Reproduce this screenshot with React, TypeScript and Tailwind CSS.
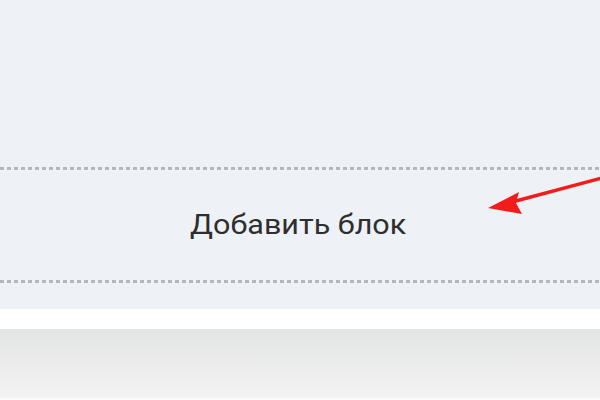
export default function App() {
  return (
    <div className="relative h-[400px] w-[600px] overflow-hidden bg-white font-['Roboto','Liberation_Sans',sans-serif]">
      <section className="flex h-[309px] flex-col bg-[#eef1f6]">
        <div className="h-[167px]" />
        <div className="h-[3px] bg-[repeating-linear-gradient(90deg,#b5b7bb_0_4px,transparent_4px_7px)]" />
        <div className="flex h-[110px] items-center justify-center pr-[3px]">
          <span className="inline-block scale-x-[1.09] text-[28px] leading-none text-[#2e2e2e]">Добавить блок</span>
        </div>
        <div className="h-[3px] bg-[repeating-linear-gradient(90deg,#b5b7bb_0_4px,transparent_4px_7px)]" />
      </section>
      <div className="h-[20px] bg-white" />
      <div className="h-[69px] bg-[linear-gradient(180deg,#e3e4e4,#f3f3f3)]" />
      <div className="h-[2px] bg-[#fafafa]" />

      <svg className="absolute left-0 top-0" width="600" height="400" viewBox="0 0 600 400">
        <line x1="602" y1="178" x2="512" y2="202" stroke="#f21c1c" strokeWidth="3.5" />
        <polygon points="488,208 519,192 516,203 522,214" fill="#f21c1c" />
      </svg>
    </div>
  );
}
